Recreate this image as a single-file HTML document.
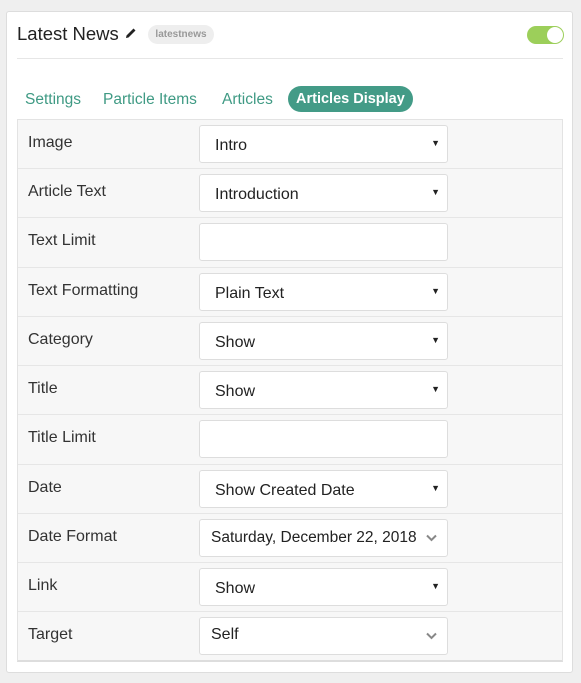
<!DOCTYPE html>
<html><head><style>
*{box-sizing:border-box;margin:0;padding:0}
body{width:581px;height:683px;background:#efefef;font-family:"Liberation Sans",sans-serif;position:relative;overflow:hidden}
.card{position:absolute;left:6px;top:11px;width:567px;height:662px;background:#fff;border:1px solid #ddd;border-radius:3px}
.title{position:absolute;left:17px;top:23px;font-size:18.5px;color:#222}
.pen{position:absolute;left:125px;top:27px}
.badge{position:absolute;left:148px;top:25px;width:66px;height:19px;border-radius:10px;background:#eee;color:#999;font-size:10px;font-weight:bold;text-align:center;line-height:19px}
.tog{position:absolute;left:527px;top:26px;width:37px;height:18px;border-radius:9px;background:#9ccf5a}
.tog:after{content:"";position:absolute;right:1px;top:1px;width:16px;height:16px;border-radius:50%;background:#fff}
.hr{position:absolute;left:17px;top:58px;width:546px;height:1px;background:#e6e6e6}
.tab{position:absolute;top:91px;font-size:15.5px;color:#3f9a84}
.tab.act{top:86px;background:#439b87;color:#fff;border-radius:13px;padding:0 8px;height:26px;line-height:26px;font-weight:bold;font-size:14.5px}
.tbl{position:absolute;left:17px;top:119px;width:546px;height:543px;background:#f7f7f7;border:1px solid #e3e3e3;border-bottom:2px solid #ddd}
.row{position:absolute;left:0;width:544px;border-bottom:1px solid #e6e6e6}
.lbl{position:absolute;left:10px;font-size:16px;color:#333}
.sel{position:absolute;left:181px;width:249px;height:38px;background:#fff;border:1px solid #ddd;border-radius:3px;font-size:16px;color:#222}
.sel span{position:absolute;left:15px;top:11px}
.sel .ar{position:absolute;right:7px;top:12px;font-size:9px;left:auto}
.chev{position:absolute;right:10px;top:14px}
</style></head><body>
<div class="card"></div>
<div class="title">Latest News</div>
<svg class="pen" width="12" height="12" viewBox="0 0 12 12"><path d="M1 11 L1.5 8.5 L8.5 1.5 L10.5 3.5 L3.5 10.5 Z" fill="#222"/></svg>
<div class="badge">latestnews</div>
<div class="tog"></div>
<div class="hr"></div>
<div class="tab" style="left:25px">Settings</div>
<div class="tab" style="left:103px">Particle Items</div>
<div class="tab" style="left:222px">Articles</div>
<div class="tab act" style="left:288px">Articles Display</div>
<div class="tbl">
<div class="row" style="top:0;height:49px"><div class="lbl" style="top:14px">Image</div><div class="sel" style="top:5px"><span>Intro</span><span class="ar">▼</span></div></div>
<div class="row" style="top:49px;height:49px"><div class="lbl" style="top:14px">Article Text</div><div class="sel" style="top:5px"><span>Introduction</span><span class="ar">▼</span></div></div>
<div class="row" style="top:98px;height:50px"><div class="lbl" style="top:14px">Text Limit</div><div class="sel" style="top:5px"></div></div>
<div class="row" style="top:148px;height:49px"><div class="lbl" style="top:14px">Text Formatting</div><div class="sel" style="top:5px"><span>Plain Text</span><span class="ar">▼</span></div></div>
<div class="row" style="top:197px;height:49px"><div class="lbl" style="top:14px">Category</div><div class="sel" style="top:5px"><span>Show</span><span class="ar">▼</span></div></div>
<div class="row" style="top:246px;height:49px"><div class="lbl" style="top:14px">Title</div><div class="sel" style="top:5px"><span>Show</span><span class="ar">▼</span></div></div>
<div class="row" style="top:295px;height:50px"><div class="lbl" style="top:14px">Title Limit</div><div class="sel" style="top:5px"></div></div>
<div class="row" style="top:345px;height:49px"><div class="lbl" style="top:14px">Date</div><div class="sel" style="top:5px"><span>Show Created Date</span><span class="ar">▼</span></div></div>
<div class="row" style="top:394px;height:49px"><div class="lbl" style="top:14px">Date Format</div><div class="sel" style="top:5px"><span style="left:11px;top:9px;font-size:15.5px">Saturday, December 22, 2018</span><svg class="chev" width="11" height="8" viewBox="0 0 11 8"><path d="M1 1.5 L5.5 6 L10 1.5" stroke="#888" stroke-width="2" fill="none"/></svg></div></div>
<div class="row" style="top:443px;height:49px"><div class="lbl" style="top:14px">Link</div><div class="sel" style="top:5px"><span>Show</span><span class="ar">▼</span></div></div>
<div class="row" style="top:492px;height:50px;border:none"><div class="lbl" style="top:14px">Target</div><div class="sel" style="top:5px"><span style="left:11px;top:8px">Self</span><svg class="chev" width="11" height="8" viewBox="0 0 11 8"><path d="M1 1.5 L5.5 6 L10 1.5" stroke="#888" stroke-width="2" fill="none"/></svg></div></div>
</div>
</body></html>
